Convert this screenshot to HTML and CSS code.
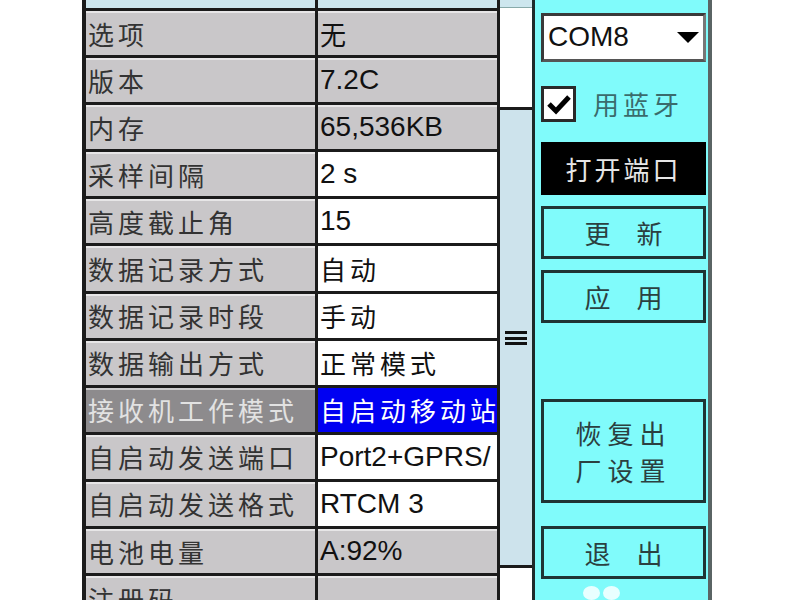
FILE: index.html
```html
<!DOCTYPE html>
<html lang="zh-CN">
<head>
<meta charset="utf-8">
<title>接收机设置</title>
<link rel="stylesheet" href="styles.css">
</head>
<body>
<div class="screen">
  <div class="gutter"></div>
  <div class="grid">
    <div class="hdr"></div><div class="hdr"></div>
    <div class="cell lab">选项</div><div class="cell val grey cn">无</div>
    <div class="cell lab">版本</div><div class="cell val grey">7.2C</div>
    <div class="cell lab">内存</div><div class="cell val grey">65,536KB</div>
    <div class="cell lab">采样间隔</div><div class="cell val">2 s</div>
    <div class="cell lab">高度截止角</div><div class="cell val">15</div>
    <div class="cell lab">数据记录方式</div><div class="cell val cn">自动</div>
    <div class="cell lab">数据记录时段</div><div class="cell val cn">手动</div>
    <div class="cell lab">数据输出方式</div><div class="cell val cn">正常模式</div>
    <div class="cell lab sel">接收机工作模式</div><div class="cell val sel cn">自启动移动站</div>
    <div class="cell lab">自启动发送端口</div><div class="cell val">Port2+GPRS/</div>
    <div class="cell lab">自启动发送格式</div><div class="cell val">RTCM 3</div>
    <div class="cell lab">电池电量</div><div class="cell val grey">A:92%</div>
    <div class="cell lab">注册码</div><div class="cell val grey"></div>
  </div>
  <div class="scroll">
    <div class="scroll-top"></div>
    <div class="track"></div>
    <div class="thumb"><span class="grip"></span></div>
    <div class="track fill"></div>
  </div>
  <div class="panel">
    <div class="combo">
      <span class="combo-text">COM8</span>
      <svg class="arrow" width="22" height="11" viewBox="0 0 22 11"><polygon points="0,0 22,0 11,11" fill="#000"/></svg>
    </div>
    <div class="check-row">
      <span class="checkbox">
        <svg width="26" height="22" viewBox="0 0 26 22"><polyline points="3,11 10,18 23,4" fill="none" stroke="#000" stroke-width="5"/></svg>
      </span>
      <span class="check-label">用蓝牙</span>
    </div>
    <div class="btn dark">打开端口</div>
    <div class="btn gap1">更　新</div>
    <div class="btn gap1">应　用</div>
    <div class="btn tall">恢复出<br>厂设置</div>
    <div class="btn gap3">退　出</div>
    <div class="blobs"><span></span><span></span></div>
  </div>
  <div class="gutter-r"></div>
</div>
</body>
</html>
```

FILE: styles.css
```css
* { box-sizing: border-box; }
html, body { margin: 0; padding: 0; background: #fff; }
body {
  font-family: "Liberation Sans", "Noto Sans CJK SC", sans-serif;
}
.screen {
  display: flex;
  width: 800px;
  height: 600px;
  overflow: hidden;
  align-items: flex-start;
}
.gutter { width: 82px; flex: none; height: 600px; background: #fff; }
.gutter-r { flex: 1; height: 600px; background: #fff; }

.grid {
  flex: none;
  display: grid;
  grid-template-columns: 229px 179px;
  grid-template-rows: 8px;
  grid-auto-rows: 44.1px;
  column-gap: 3px;
  row-gap: 3px;
  background: #1b1b1b;
  border-left: 4px solid #1b1b1b;
  border-right: 3px solid #1b1b1b;
  width: 418px;
}
.hdr { background: #cde6ee; }
.cell {
  display: flex;
  align-items: center;
  overflow: hidden;
  white-space: nowrap;
  padding-left: 2px;
  box-shadow: inset 0 2px 0 rgba(255,255,255,0.55);
}
.lab {
  background: #c9c7c9;
  color: #333;
  font-family: "Noto Sans CJK SC", sans-serif;
  font-size: 26px;
  letter-spacing: 4px;
}
.val {
  background: #fff;
  color: #111;
  font-size: 28px;
  box-shadow: none;
}
.val.grey { background: #c9c7c9; box-shadow: inset 0 2px 0 rgba(255,255,255,0.55); }
.val.cn {
  font-family: "Noto Sans CJK SC", sans-serif;
  font-size: 26px;
  letter-spacing: 4px;
}
.lab.sel { background: #8d8b8d; color: #e2e2e2; }
.val.sel { background: #0000f2; color: #fff; }

.scroll {
  flex: none;
  width: 32px;
  height: 600px;
  display: flex;
  flex-direction: column;
}
.scroll-top { height: 8px; background: #cde6ee; border-bottom: 1px solid #8aa; }
.track { height: 99px; background: #fff; }
.track.fill { flex: 1; height: auto; }
.thumb {
  height: 461px;
  background: #cde3ec;
  border-top: 3px solid #1b1b1b;
  border-bottom: 3px solid #1b1b1b;
  display: flex;
  align-items: center;
  justify-content: center;
}
.grip {
  display: block;
  width: 22px;
  height: 14px;
  background: linear-gradient(#111 0 3px, transparent 3px 5.5px, #111 5.5px 8.5px, transparent 8.5px 11px, #111 11px 14px);
}

.panel {
  flex: none;
  width: 180px;
  height: 600px;
  background: #80fbfb;
  border-left: 3px solid #1e2a2a;
  border-right: 4px solid #5a6464;
  padding: 13px 2px 0 6px;
  display: flex;
  flex-direction: column;
}
.combo {
  height: 50px;
  background: #fff;
  border: 3px solid #3a3a3a;
  border-right-color: #777;
  border-bottom-color: #555;
  display: flex;
  align-items: center;
  justify-content: space-between;
  padding: 0 4px 0 4px;
}
.combo-text { font-size: 28px; color: #111; }
.check-row {
  margin-top: 24px;
  height: 36px;
  display: flex;
  align-items: center;
}
.checkbox {
  width: 35px;
  height: 36px;
  background: #fff;
  border: 3px solid #2a2a2a;
  display: flex;
  align-items: center;
  justify-content: center;
}
.check-label {
  margin-left: 17px;
  font-family: "Noto Sans CJK SC", sans-serif;
  font-size: 26px;
  letter-spacing: 4px;
  color: #3a6b6c;
}
.btn {
  height: 54px;
  border: 3px solid #1f3434;
  display: flex;
  align-items: center;
  justify-content: center;
  text-align: center;
  font-family: "Noto Sans CJK SC", sans-serif;
  font-size: 26px;
  color: #2b4040;
  line-height: 37px;
}
.btn.dark {
  margin-top: 20px;
  background: #000;
  border-color: #000;
  color: #e6e6e6;
  letter-spacing: 3px;
}
.btn.gap1 { margin-top: 11px; }
.btn.tall {
  margin-top: 76px;
  height: 107px;
  letter-spacing: 6px;
}
.btn.gap3 { margin-top: 23px; }
.blobs {
  margin-top: 7px;
  padding-left: 42px;
  display: flex;
  gap: 3px;
}
.blobs span {
  width: 17px;
  height: 14px;
  border-radius: 50%;
  background: #e8ffff;
}
```
